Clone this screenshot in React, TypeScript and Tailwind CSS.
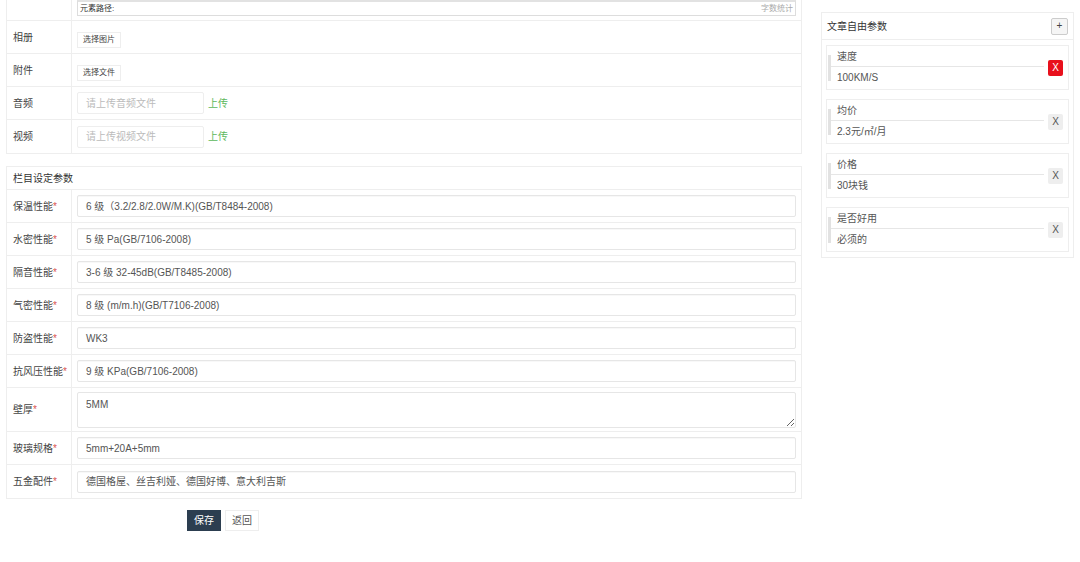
import React from "react";

const params = [
  { label: "保温性能", value: "6 级（3.2/2.8/2.0W/M.K)(GB/T8484-2008)" },
  { label: "水密性能", value: "5 级 Pa(GB/7106-2008)" },
  { label: "隔音性能", value: "3-6 级 32-45dB(GB/T8485-2008)" },
  { label: "气密性能", value: "8 级 (m/m.h)(GB/T7106-2008)" },
  { label: "防盗性能", value: "WK3" },
  { label: "抗风压性能", value: "9 级 KPa(GB/7106-2008)" },
];

const params2 = [
  { label: "玻璃规格", value: "5mm+20A+5mm" },
  { label: "五金配件", value: "德国格屋、丝吉利娅、德国好博、意大利吉斯" },
];

const freeParams = [
  { name: "速度", value: "100KM/S", danger: true },
  { name: "均价", value: "2.3元/㎡/月", danger: false },
  { name: "价格", value: "30块钱", danger: false },
  { name: "是否好用", value: "必须的", danger: false },
];

const Row = ({ label, children, h = "h-[33px]", required = false }: { label: string; children: React.ReactNode; h?: string; required?: boolean }) => (
  <div className={`flex ${h} border-b border-[#eee] last:border-b-0`}>
    <div className="w-[65px] shrink-0 flex items-center pl-[6px] border-r border-[#eee] text-[#444]">
      {label}
      {required && <span className="text-[#d9534f]">*</span>}
    </div>
    <div className="flex-1 flex items-center px-[5px]">{children}</div>
  </div>
);

const TextInput = ({ value }: { value: string }) => (
  <div className="w-full h-[22px] border border-[#e6e6e6] rounded-[2px] flex items-center pl-[8px] text-[#555] shadow-[inset_0_1px_1px_rgba(0,0,0,0.03)]">
    {value}
  </div>
);

export default function App() {
  return (
    <div className="w-[1080px] h-[562px] bg-white flex font-['Liberation_Sans','Noto_Sans_CJK_SC',sans-serif] text-[10px] overflow-hidden">
      <div className="w-[796px] ml-[6px] flex flex-col shrink-0">
        {/* upload table */}
        <div className="border border-t-0 border-[#eee]">
          <div className="flex h-[21px] border-b border-[#eee]">
            <div className="w-[65px] shrink-0 border-r border-[#eee]" />
            <div className="flex-1 px-[5px]">
              <div className="h-[16px] border border-t-[2px] border-[#ddd] border-t-[#e2e2e2] flex items-center justify-between px-[2px] text-[8px]">
                <span className="text-[#333]">元素路径:</span>
                <span className="text-[#aaa]">字数统计</span>
              </div>
            </div>
          </div>
          <Row label="相册">
            <button className="h-[16px] px-[5px] border border-[#eee] bg-white text-[8px] text-[#444] mt-[5px]">选择图片</button>
          </Row>
          <Row label="附件">
            <button className="h-[16px] px-[5px] border border-[#eee] bg-white text-[8px] text-[#444] mt-[5px]">选择文件</button>
          </Row>
          <Row label="音频">
            <div className="w-[127px] h-[22px] border border-[#eee] rounded-[2px] flex items-center pl-[8px] text-[#bbb]">请上传音频文件</div>
            <span className="ml-[4px] text-[#5cb85c]">上传</span>
          </Row>
          <Row label="视频">
            <div className="w-[127px] h-[22px] border border-[#eee] rounded-[2px] flex items-center pl-[8px] text-[#bbb]">请上传视频文件</div>
            <span className="ml-[4px] text-[#5cb85c]">上传</span>
          </Row>
        </div>

        {/* params table */}
        <div className="mt-[12px] border border-[#eee]">
          <div className="h-[23px] flex items-center pl-[6px] border-b border-[#eee] text-[#333]">栏目设定参数</div>
          {params.map((p) => (
            <Row key={p.label} label={p.label} required>
              <TextInput value={p.value} />
            </Row>
          ))}
          <Row label="壁厚" required h="h-[44px]">
            <textarea
              defaultValue="5MM"
              className="w-full h-[36px] border border-[#e6e6e6] rounded-[2px] pl-[8px] pt-[4px] text-[#555] text-[10px] resize-y outline-none"
            />
          </Row>
          {params2.map((p) => (
            <Row key={p.label} label={p.label} required>
              <TextInput value={p.value} />
            </Row>
          ))}
        </div>

        <div className="flex gap-[4px] pl-[181px] mt-[11px]">
          <button className="h-[21px] w-[34px] bg-[#2c3e50] text-white text-[10px]">保存</button>
          <button className="h-[21px] w-[34px] bg-white border border-[#eee] text-[#555] text-[10px]">返回</button>
        </div>
      </div>

      {/* free params */}
      <div className="ml-[19px] mt-[12px] w-[253px] h-[246px] border border-[#eee] flex flex-col">
        <div className="h-[27px] flex items-center justify-between pl-[5px] pr-[5px] border-b border-[#eee] text-[#333]">
          <span>文章自由参数</span>
          <button className="w-[17px] h-[17px] border border-[#ccc] bg-[#f5f5f5] rounded-[2px] text-[10px] text-[#444] leading-none">+</button>
        </div>
        <div className="flex flex-col gap-[9px] px-[4px] pt-[5px]">
          {freeParams.map((f) => (
            <div key={f.name} className="h-[45px] border border-[#eee] flex items-center pl-[1px] pr-[5px]">
              <div className="flex-1 flex self-stretch items-center">
                <div className="w-[3px] h-[26px] bg-[#e2e2e2]" />
                <div className="flex-1 flex flex-col">
                  <div className="h-[20px] flex items-center pl-[6px] border-b border-[#e6e6e6] text-[#555]">{f.name}</div>
                  <div className="h-[22px] flex items-center pl-[6px] text-[#555]">{f.value}</div>
                </div>
              </div>
              <div
                className={
                  f.danger
                    ? "w-[15px] h-[16px] ml-[4px] rounded-[2px] bg-[#e8101c] text-white flex items-center justify-center text-[10px]"
                    : "w-[15px] h-[16px] ml-[4px] rounded-[2px] bg-[#eee] text-[#555] flex items-center justify-center text-[10px]"
                }
              >
                X
              </div>
            </div>
          ))}
        </div>
      </div>
    </div>
  );
}
